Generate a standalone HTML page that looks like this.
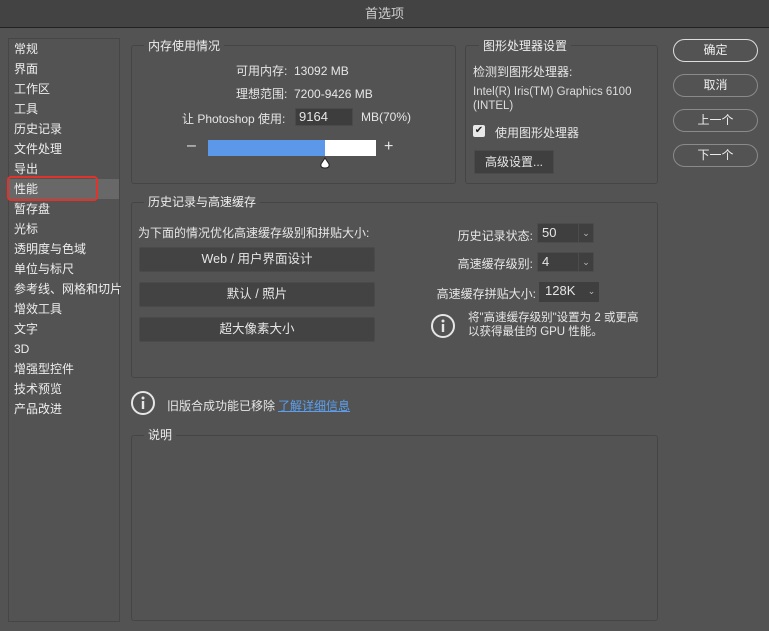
<!DOCTYPE html>
<html><head><meta charset="utf-8"><style>
*{margin:0;padding:0;box-sizing:border-box}
body{width:769px;height:631px;background:#535353;font-family:"Liberation Sans","Noto Sans CJK SC",sans-serif;font-size:12px;color:#e6e6e6;position:relative;overflow:hidden}
.a{position:absolute;white-space:nowrap}
.title{left:0;top:0;width:769px;height:28px;background:#434343;border-bottom:1px solid #222;text-align:center;line-height:28px;font-size:13px;color:#cfcfcf}
.grp{position:absolute;border:1px solid #454545;border-radius:3px}
.leg{position:absolute;background:#535353;padding:0 4px;font-size:12px;color:#eee;line-height:14px}
.side{left:8px;top:38px;width:112px;height:584px;border:1px solid #464646;background:#535353}
.si{position:absolute;left:14px;font-size:12px;line-height:14px;color:#eee}
.btn{position:absolute;left:673px;width:85px;height:23px;border:1px solid #8a8a8a;border-radius:12px;text-align:center;line-height:21px;color:#eee}
.pb{position:absolute;left:139px;width:236px;height:25px;background:#434343;border:1px solid #4a4a4a;border-radius:2px;text-align:center;line-height:23px;font-size:12.5px}
.r{text-align:right}
.sel{position:absolute;background:#3f3f3f;height:20px;border:1px solid #4c4c4c;line-height:18px;padding-left:4px;font-size:13px}
.sel i{position:absolute;right:0;top:0;width:15px;height:18px;border-left:1px solid #4c4c4c;font-style:normal;font-size:9px;text-align:center;color:#bbb}
</style></head><body>
<div class="a title">首选项</div>
<div class="a side"></div>
<div class="a" style="left:9px;top:179px;width:110px;height:20px;background:#686868"></div>
<div class="a" style="left:7px;top:176px;width:91px;height:25px;border:2px solid #e0332b;border-radius:4px"></div>
<div class="si" style="top:42px">常规</div>
<div class="si" style="top:62px">界面</div>
<div class="si" style="top:82px">工作区</div>
<div class="si" style="top:102px">工具</div>
<div class="si" style="top:122px">历史记录</div>
<div class="si" style="top:142px">文件处理</div>
<div class="si" style="top:162px">导出</div>
<div class="si" style="top:182px">性能</div>
<div class="si" style="top:202px">暂存盘</div>
<div class="si" style="top:222px">光标</div>
<div class="si" style="top:242px">透明度与色域</div>
<div class="si" style="top:262px">单位与标尺</div>
<div class="si" style="top:282px">参考线、网格和切片</div>
<div class="si" style="top:302px">增效工具</div>
<div class="si" style="top:322px">文字</div>
<div class="si" style="top:342px">3D</div>
<div class="si" style="top:362px">增强型控件</div>
<div class="si" style="top:382px">技术预览</div>
<div class="si" style="top:402px">产品改进</div>

<div class="grp" style="left:131px;top:45px;width:325px;height:139px"></div>
<div class="leg" style="left:144px;top:39px">内存使用情况</div>
<div class="a" style="left:236px;top:62px">可用内存:&nbsp; 13092 MB</div>
<div class="a" style="left:236px;top:85px">理想范围:&nbsp; 7200-9426 MB</div>
<div class="a" style="left:182px;top:110px">让 Photoshop 使用:</div>
<div class="a" style="left:295px;top:108px;width:58px;height:18px;background:#3d3d3d;border:1px solid #4a4a4a;line-height:16px;padding-left:3px;font-size:13px">9164</div>
<div class="a" style="left:361px;top:110px">MB(70%)</div>
<div class="a" style="left:187px;top:139px;font-size:16px;line-height:14px">–</div>
<div class="a" style="left:208px;top:140px;width:168px;height:16px;background:#fff"></div>
<div class="a" style="left:208px;top:140px;width:117px;height:16px;background:#5b98ea"></div>
<div class="a" style="left:384px;top:139px;font-size:16px;line-height:16px">+</div>
<svg class="a" style="left:319px;top:157px" width="12" height="12"><path d="M6 1 L10 7 Q11 11 6 11 Q1 11 2 7Z" fill="#fff" stroke="#222" stroke-width="1"/></svg>

<div class="grp" style="left:465px;top:45px;width:193px;height:139px"></div>
<div class="leg" style="left:479px;top:39px">图形处理器设置</div>
<div class="a" style="left:473px;top:63px">检测到图形处理器:</div>
<div class="a" style="left:473px;top:85px;line-height:14px;font-size:11.5px;color:#ddd">Intel(R) Iris(TM) Graphics 6100<br>(INTEL)</div>
<div class="a" style="left:473px;top:125px;width:12px;height:12px;background:#e8e8e8;border-radius:2px;color:#222;font-size:10px;line-height:12px;text-align:center">✔</div>
<div class="a" style="left:495px;top:124px">使用图形处理器</div>
<div class="a" style="left:474px;top:150px;width:80px;height:24px;background:#3f3f3f;border:1px solid #4b4b4b;line-height:22px;text-align:center">高级设置...</div>

<div class="btn" style="top:39px;border-color:#ddd">确定</div>
<div class="btn" style="top:74px">取消</div>
<div class="btn" style="top:109px">上一个</div>
<div class="btn" style="top:144px">下一个</div>

<div class="grp" style="left:131px;top:202px;width:527px;height:176px"></div>
<div class="leg" style="left:144px;top:195px">历史记录与高速缓存</div>
<div class="a" style="left:138px;top:224px">为下面的情况优化高速缓存级别和拼贴大小:</div>
<div class="pb" style="top:247px">Web / 用户界面设计</div>
<div class="pb" style="top:282px">默认 / 照片</div>
<div class="pb" style="top:317px">超大像素大小</div>
<div class="a r" style="left:420px;width:113px;top:227px">历史记录状态:</div>
<div class="sel" style="left:537px;top:223px;width:57px">50<i>⌄</i></div>
<div class="a r" style="left:420px;width:113px;top:255px">高速缓存级别:</div>
<div class="sel" style="left:537px;top:252px;width:57px">4<i>⌄</i></div>
<div class="a r" style="left:420px;width:116px;top:285px">高速缓存拼贴大小:</div>
<div class="sel" style="left:539px;top:282px;width:60px;padding-left:6px;border:none">128K<i style="border:none">⌄</i></div>
<svg class="a" style="left:430px;top:313px" width="26" height="26"><circle cx="13" cy="13" r="11" fill="none" stroke="#e6e6e6" stroke-width="2"/><circle cx="13" cy="8" r="1.5" fill="#e6e6e6"/><rect x="11.8" y="11" width="2.4" height="8" fill="#e6e6e6"/></svg>
<div class="a" style="left:468px;top:311px;line-height:14px;font-size:11.5px">将"高速缓存级别"设置为 2 或更高<br>以获得最佳的 GPU 性能。</div>

<svg class="a" style="left:130px;top:390px" width="26" height="26"><circle cx="13" cy="13" r="11" fill="none" stroke="#e6e6e6" stroke-width="2"/><circle cx="13" cy="8" r="1.5" fill="#e6e6e6"/><rect x="11.8" y="11" width="2.4" height="8" fill="#e6e6e6"/></svg>
<div class="a" style="left:167px;top:397px">旧版合成功能已移除</div>
<div class="a" style="left:278px;top:397px;color:#5aa0f0;text-decoration:underline">了解详细信息</div>

<div class="grp" style="left:131px;top:435px;width:527px;height:186px"></div>
<div class="leg" style="left:144px;top:428px">说明</div>
</body></html>
